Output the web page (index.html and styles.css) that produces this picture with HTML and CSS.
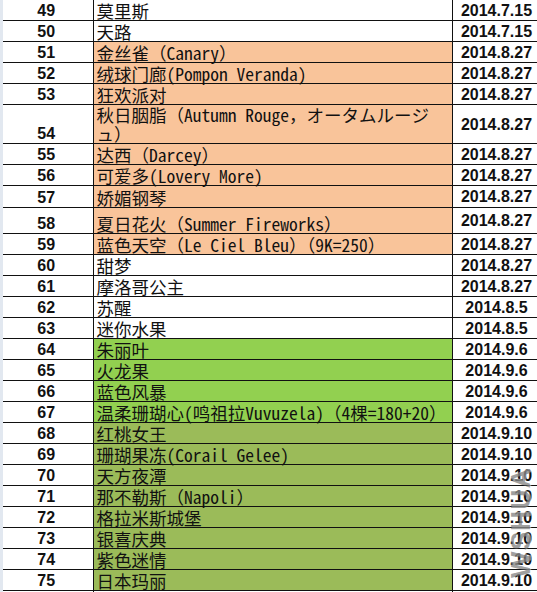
FILE: index.html
```html
<!DOCTYPE html>
<html lang="zh-CN">
<head>
  <meta charset="UTF-8">
  <title>品种记录</title>
  <link rel="stylesheet" href="styles.css">
</head>
<body>
  <div class="sheet">
    <table class="grid">
      <colgroup>
        <col class="col-no">
        <col class="col-name">
        <col class="col-date">
      </colgroup>
      <tbody>
        <tr><td class="no">49</td><td class="name">莫里斯</td><td class="date">2014.7.15</td></tr>
        <tr><td class="no">50</td><td class="name">天路</td><td class="date">2014.7.15</td></tr>
        <tr class="orange"><td class="no">51</td><td class="name">金丝雀（Canary）</td><td class="date">2014.8.27</td></tr>
        <tr class="orange"><td class="no">52</td><td class="name">绒球门廊(Pompon Veranda)</td><td class="date">2014.8.27</td></tr>
        <tr class="orange"><td class="no">53</td><td class="name">狂欢派对</td><td class="date">2014.8.27</td></tr>
        <tr class="orange double"><td class="no">54</td><td class="name">秋日胭脂（Autumn Rouge，オータムルージ<br>ュ）</td><td class="date">2014.8.27</td></tr>
        <tr class="orange"><td class="no">55</td><td class="name">达西（Darcey）</td><td class="date">2014.8.27</td></tr>
        <tr class="orange"><td class="no">56</td><td class="name">可爱多(Lovery More)</td><td class="date">2014.8.27</td></tr>
        <tr class="orange wide"><td class="no">57</td><td class="name">娇媚钢琴</td><td class="date">2014.8.27</td></tr>
        <tr class="orange raised"><td class="no">58</td><td class="name">夏日花火（Summer Fireworks）</td><td class="date">2014.8.27</td></tr>
        <tr class="orange"><td class="no">59</td><td class="name">蓝色天空（Le Ciel Bleu）（9K=250）</td><td class="date">2014.8.27</td></tr>
        <tr><td class="no">60</td><td class="name">甜梦</td><td class="date">2014.8.27</td></tr>
        <tr><td class="no">61</td><td class="name">摩洛哥公主</td><td class="date">2014.8.27</td></tr>
        <tr><td class="no">62</td><td class="name">苏醒</td><td class="date">2014.8.5</td></tr>
        <tr><td class="no">63</td><td class="name">迷你水果</td><td class="date">2014.8.5</td></tr>
        <tr class="lime"><td class="no">64</td><td class="name">朱丽叶</td><td class="date">2014.9.6</td></tr>
        <tr class="lime"><td class="no">65</td><td class="name">火龙果</td><td class="date">2014.9.6</td></tr>
        <tr class="lime"><td class="no">66</td><td class="name">蓝色风暴</td><td class="date">2014.9.6</td></tr>
        <tr class="lime"><td class="no">67</td><td class="name">温柔珊瑚心(鸣祖拉Vuvuzela)（4棵=180+20）</td><td class="date">2014.9.6</td></tr>
        <tr class="olive"><td class="no">68</td><td class="name">红桃女王</td><td class="date">2014.9.10</td></tr>
        <tr class="olive"><td class="no">69</td><td class="name">珊瑚果冻(Corail Gelee)</td><td class="date">2014.9.10</td></tr>
        <tr class="olive"><td class="no">70</td><td class="name">天方夜潭</td><td class="date">2014.9.10</td></tr>
        <tr class="olive"><td class="no">71</td><td class="name">那不勒斯（Napoli）</td><td class="date">2014.9.10</td></tr>
        <tr class="olive"><td class="no">72</td><td class="name">格拉米斯城堡</td><td class="date">2014.9.10</td></tr>
        <tr class="olive"><td class="no">73</td><td class="name">银喜庆典</td><td class="date">2014.9.10</td></tr>
        <tr class="olive"><td class="no">74</td><td class="name">紫色迷情</td><td class="date">2014.9.10</td></tr>
        <tr class="olive"><td class="no">75</td><td class="name">日本玛丽</td><td class="date">2014.9.10</td></tr>
        <tr><td class="no"></td><td class="name"></td><td class="date"></td></tr>
      </tbody>
    </table>
    <div class="watermark">WSHUA</div>
  </div>
</body>
</html>
```

FILE: styles.css
```css
:root {
  --line: #111111;
  --orange: #f9c49a;
  --lime: #92d050;
  --olive: #9bbb59;
  --edge: #e2e8f0;
}

* {
  margin: 0;
  padding: 0;
  box-sizing: border-box;
}

html, body {
  width: 537px;
  height: 592px;
  overflow: hidden;
  background: #ffffff;
}

.sheet {
  position: relative;
  width: 537px;
  height: 592px;
  overflow: hidden;
  border-left: 3px solid var(--edge);
}

.grid {
  border-collapse: collapse;
  table-layout: fixed;
  width: 541px;
  margin-top: -1px;
  margin-left: -3px;
}

.col-no { width: 93px; }
.col-name { width: 359px; }
.col-date { width: 89px; }

.grid td {
  height: 21px;
  border: 1px solid var(--line);
  background: #ffffff;
  color: #111111;
  white-space: nowrap;
}

.grid td:first-child {
  border-left: none;
}

.no {
  font-family: "Liberation Sans", Arial, sans-serif;
  font-weight: 700;
  font-size: 16px;
  text-align: center;
  vertical-align: bottom;
  line-height: 19px;
}

.name {
  font-family: "Noto Sans Mono CJK SC", "Noto Sans CJK SC", monospace;
  font-size: 17.5px;
  line-height: 19px;
  padding-left: 3px;
  vertical-align: bottom;
}

.date {
  font-family: "Liberation Sans", Arial, sans-serif;
  font-weight: 700;
  font-size: 16px;
  text-align: center;
  vertical-align: middle;
  line-height: 19px;
}

.orange .name { background: var(--orange); }
.lime .name { background: var(--lime); }
.olive .name { background: var(--olive); }

.double td { height: 38px; }
.double .name { vertical-align: top; }
.wide td { height: 22px; }
.raised td { height: 26px; }

.watermark {
  position: absolute;
  left: 466px;
  top: 510px;
  width: 104px;
  transform: rotate(-90deg);
  font-family: "Liberation Sans", Arial, sans-serif;
  font-size: 28px;
  font-weight: 700;
  letter-spacing: 1px;
  color: rgba(95, 95, 95, 0.6);
  text-shadow: 1px 1px 0 rgba(255, 255, 255, 0.5);
  text-align: center;
  pointer-events: none;
}
```
